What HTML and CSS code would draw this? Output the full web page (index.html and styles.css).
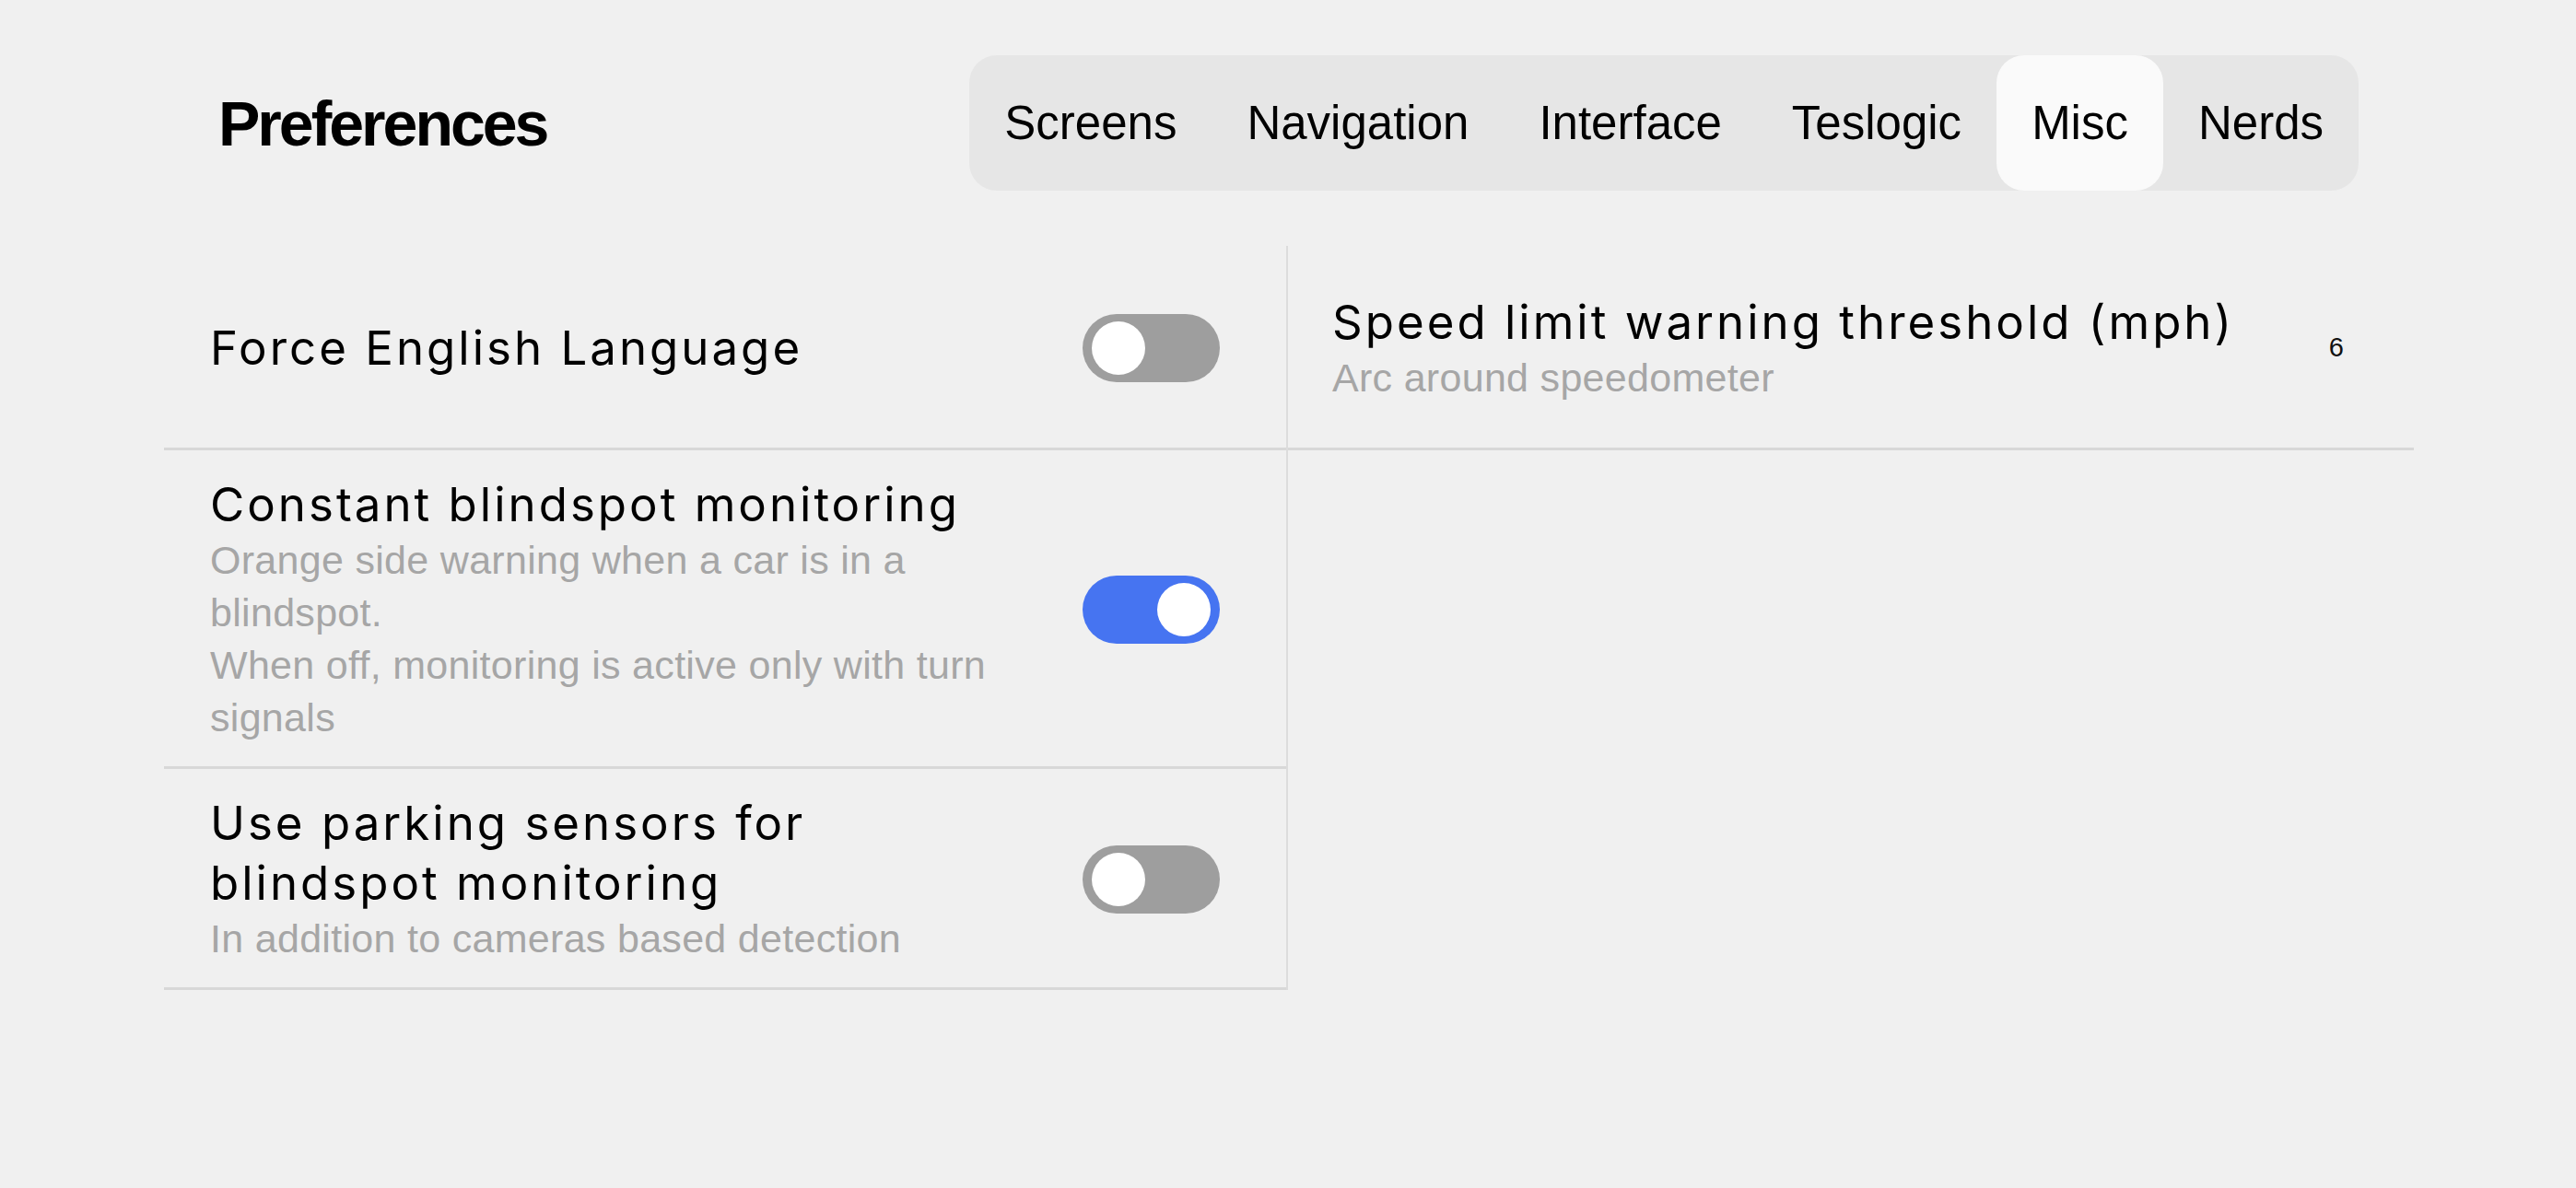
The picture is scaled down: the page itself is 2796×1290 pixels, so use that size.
FILE: index.html
```html
<!DOCTYPE html>
<html lang="en">
<head>
<meta charset="utf-8">
<title>Preferences</title>
<link rel="stylesheet" href="styles.css">
</head>
<body>
<div class="page">
  <header class="header">
    <h1 class="title">Preferences</h1>
    <nav class="tabs">
      <div class="tab">Screens</div>
      <div class="tab">Navigation</div>
      <div class="tab">Interface</div>
      <div class="tab">Teslogic</div>
      <div class="tab active">Misc</div>
      <div class="tab">Nerds</div>
    </nav>
  </header>
  <main class="grid">
    <section class="col col-left">
      <div class="row row-first">
        <div class="text">
          <div class="label">Force English Language</div>
        </div>
        <div class="toggle"><span class="knob"></span></div>
      </div>
      <div class="row">
        <div class="text">
          <div class="label">Constant blindspot monitoring</div>
          <div class="desc">Orange side warning when a car is in a blindspot.<br>When off, monitoring is active only with turn signals</div>
        </div>
        <div class="toggle on"><span class="knob"></span></div>
      </div>
      <div class="row">
        <div class="text">
          <div class="label">Use parking sensors for blindspot monitoring</div>
          <div class="desc">In addition to cameras based detection</div>
        </div>
        <div class="toggle"><span class="knob"></span></div>
      </div>
    </section>
    <section class="col col-right">
      <div class="row row-first">
        <div class="text text-wide">
          <div class="label">Speed limit warning threshold (mph)</div>
          <div class="desc">Arc around speedometer</div>
        </div>
        <div class="value">6</div>
      </div>
    </section>
  </main>
</div>
</body>
</html>
```

FILE: styles.css
```css
* { box-sizing: border-box; }
html, body {
  margin: 0;
  padding: 0;
  background: #f0f0f0;
  font-family: "Liberation Sans", Arial, sans-serif;
  color: #000;
}
.page {
  width: 2796px;
  height: 1290px;
  padding: 60px 176px 0 178px;
}
.header {
  display: flex;
  align-items: center;
  justify-content: space-between;
  padding: 0 60px 0 59px;
  height: 147px;
}
.title {
  margin: 0;
  font-size: 68px;
  font-weight: 700;
  letter-spacing: -3px;
  line-height: 1;
}
.tabs {
  display: flex;
  height: 147px;
  background: #e6e6e6;
  border-radius: 30px;
}
.tab {
  display: flex;
  align-items: center;
  padding: 0 38px;
  font-size: 51px;
  color: #000;
  border-radius: 30px;
}
.tab.active {
  background: #fafafa;
}
.grid {
  display: grid;
  grid-template-columns: 1220px 1222px;
  margin-top: 60px;
  align-items: start;
}
.col-left {
  border-right: 2px solid #dcdcdc;
}
.row {
  display: flex;
  align-items: center;
  justify-content: space-between;
  gap: 40px;
  padding: 26px 72px 24px 50px;
  border-bottom: 3px solid #d8d8d8;
}
.row-first {
  min-height: 222px;
}
.col-right .row {
  padding-left: 48px;
  padding-right: 76px;
}
.text {
  flex: 1;
  max-width: 870px;
}
.text-wide {
  max-width: none;
}
.label {
  font-family: Inter, "Liberation Sans", sans-serif;
  font-size: 51px;
  line-height: 65px;
  letter-spacing: 3px;
  color: #000;
}
.desc {
  font-size: 43px;
  line-height: 57px;
  letter-spacing: 0.3px;
  color: #a6a6a6;
}
.toggle {
  flex: 0 0 149px;
  width: 149px;
  height: 74px;
  border-radius: 37px;
  background: #9e9e9e;
  display: flex;
  align-items: center;
  justify-content: flex-start;
  padding: 0 10px;
}
.toggle.on {
  background: #4674f1;
  justify-content: flex-end;
}
.knob {
  width: 58px;
  height: 58px;
  border-radius: 50%;
  background: #fff;
}
.value {
  font-size: 29px;
  color: #111;
}
```
